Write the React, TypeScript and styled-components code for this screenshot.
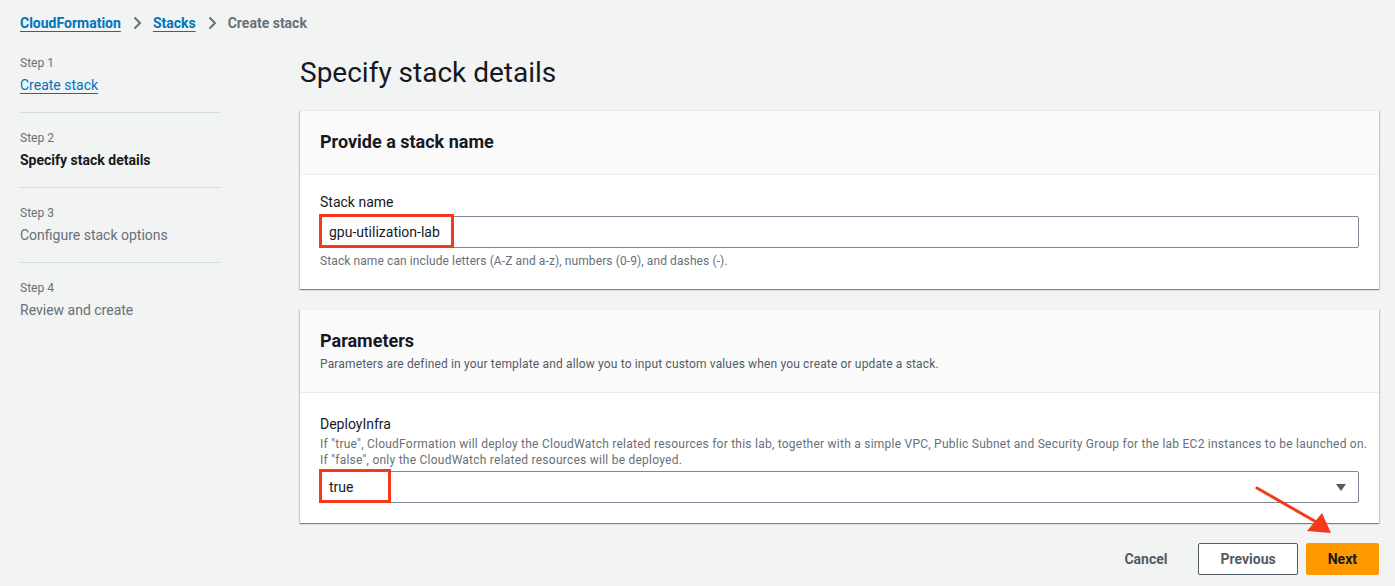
import React from "react";
import styled, { createGlobalStyle } from "styled-components";

const GlobalStyle = createGlobalStyle`
  html, body { margin: 0; padding: 0; background: #f2f3f3; }
  body { font-family: Roboto, "Noto Sans", Arial, sans-serif; color: #16191f; }
  * { box-sizing: border-box; }
`;

const Page = styled.div`
  position: relative;
  padding: 12px 16px 0 20px;
`;

const Breadcrumbs = styled.nav`
  display: flex;
  align-items: center;
  gap: 11px;
  font-size: 14px;
  line-height: 22px;
  font-weight: 700;
`;

const Crumb = styled.a<{ $current?: boolean }>`
  color: ${(p) => (p.$current ? "#687078" : "#0073bb")};
  text-decoration: ${(p) => (p.$current ? "none" : "underline")};
  text-underline-offset: 3px;
`;

const Chevron = () => (
  <svg width="10" height="14" viewBox="0 0 10 14">
    <path d="M2.5 1.5 L8 7 L2.5 12.5" fill="none" stroke="#687078" strokeWidth="2" />
  </svg>
);

const Layout = styled.div`
  display: grid;
  grid-template-columns: 200px minmax(0, 1fr);
  column-gap: 80px;
  margin-top: 21px;
`;

const StepList = styled.ol`
  list-style: none;
  margin: 0;
  padding: 0;
`;

const StepItem = styled.li`
  padding: 17px 0 16px;
  border-bottom: 1px solid #d5dbdb;
  &:first-child { padding-top: 0; }
  &:last-child { border-bottom: none; }
`;

const StepNum = styled.div`
  font-size: 12px;
  line-height: 16px;
  color: #687078;
  margin-bottom: 3px;
`;

const StepLabel = styled.div<{ $state: "link" | "active" | "idle" }>`
  font-size: 14px;
  line-height: 22px;
  color: ${(p) => (p.$state === "link" ? "#0073bb" : p.$state === "active" ? "#16191f" : "#687078")};
  font-weight: ${(p) => (p.$state === "active" ? 700 : 400)};
  text-decoration: ${(p) => (p.$state === "link" ? "underline" : "none")};
  text-underline-offset: 3px;
`;

const Main = styled.main`
  display: flex;
  flex-direction: column;
  min-width: 0;
`;

const Title = styled.h1`
  margin: 0 0 19px;
  font-size: 28px;
  line-height: 36px;
  font-weight: 400;
  color: #16191f;
`;

const Card = styled.section`
  background: #fff;
  border-top: 1px solid #eaeded;
  box-shadow: 0 1px 1px 0 rgba(0, 28, 36, 0.3), 1px 1px 1px 0 rgba(0, 28, 36, 0.15),
    -1px 1px 1px 0 rgba(0, 28, 36, 0.15);
  & + & { margin-top: 20px; }
`;

const CardHeader = styled.header`
  background: #fafafa;
  border-bottom: 1px solid #eaeded;
  padding: 19px 20px 20px;
`;

const CardTitle = styled.h2`
  margin: 0;
  font-size: 18px;
  line-height: 24px;
  font-weight: 700;
`;

const CardDesc = styled.p`
  margin: 3px 0 0;
  font-size: 12px;
  line-height: 16px;
  letter-spacing: 0.15px;
  color: #545b64;
`;

const CardBody = styled.div<{ $top: number }>`
  padding: ${(p) => p.$top}px 20px 20px;
`;

const FieldLabel = styled.label`
  display: block;
  font-size: 14px;
  line-height: 22px;
  color: #16191f;
`;

const FieldDesc = styled.div`
  margin-top: 1px;
  font-size: 12px;
  line-height: 16px;
  letter-spacing: 0.24px;
  white-space: nowrap;
  color: #687078;
`;

const Control = styled.div`
  position: relative;
  margin-top: 3px;
`;

const TextBox = styled.div`
  height: 32px;
  border: 1px solid #7d8998;
  border-radius: 2px;
  padding: 0 8px;
  display: flex;
  align-items: center;
  font-size: 14px;
  color: #16191f;
  background: #fff;
`;

const SelectBox = styled(TextBox)`
  justify-content: space-between;
  padding-right: 12px;
`;

const Hint = styled.div`
  margin-top: 5px;
  font-size: 12px;
  line-height: 16px;
  letter-spacing: 0.1px;
  color: #687078;
`;

const Highlight = styled.span<{ $w: number }>`
  position: absolute;
  left: -1px;
  top: -2px;
  width: ${(p) => p.$w}px;
  height: 34px;
  border: 3px solid #f43a1c;
  pointer-events: none;
`;

const Footer = styled.div`
  display: flex;
  justify-content: flex-end;
  align-items: center;
  gap: 8px;
  margin-top: 20px;
`;

const Button = styled.button<{ $variant: "link" | "normal" | "primary" }>`
  height: 32px;
  padding: 0 21px;
  font-family: inherit;
  font-size: 14px;
  font-weight: 700;
  border-radius: 2px;
  cursor: pointer;
  border: 1px solid
    ${(p) => (p.$variant === "normal" ? "#545b64" : p.$variant === "primary" ? "#ff9900" : "transparent")};
  background: ${(p) => (p.$variant === "primary" ? "#ff9900" : p.$variant === "normal" ? "#fff" : "transparent")};
  color: ${(p) => (p.$variant === "primary" ? "#16191f" : "#545b64")};
  margin-right: ${(p) => (p.$variant === "link" ? "1px" : "0")};
`;

const ArrowOverlay = styled.svg`
  position: absolute;
  left: 1250px;
  top: 480px;
  pointer-events: none;
`;

export default function App() {
  return (
    <>
      <GlobalStyle />
      <Page>
        <Breadcrumbs>
          <Crumb href="#">CloudFormation</Crumb>
          <Chevron />
          <Crumb href="#">Stacks</Crumb>
          <Chevron />
          <Crumb $current>Create stack</Crumb>
        </Breadcrumbs>
        <Layout>
          <StepList>
            <StepItem>
              <StepNum>Step 1</StepNum>
              <StepLabel $state="link">Create stack</StepLabel>
            </StepItem>
            <StepItem>
              <StepNum>Step 2</StepNum>
              <StepLabel $state="active">Specify stack details</StepLabel>
            </StepItem>
            <StepItem>
              <StepNum>Step 3</StepNum>
              <StepLabel $state="idle">Configure stack options</StepLabel>
            </StepItem>
            <StepItem>
              <StepNum>Step 4</StepNum>
              <StepLabel $state="idle">Review and create</StepLabel>
            </StepItem>
          </StepList>
          <Main>
            <Title>Specify stack details</Title>
            <Card>
              <CardHeader>
                <CardTitle>Provide a stack name</CardTitle>
              </CardHeader>
              <CardBody $top={16}>
                <FieldLabel>Stack name</FieldLabel>
                <Control>
                  <TextBox>gpu-utilization-lab</TextBox>
                  <Highlight $w={135} />
                </Control>
                <Hint>Stack name can include letters (A-Z and a-z), numbers (0-9), and dashes (-).</Hint>
              </CardBody>
            </Card>
            <Card>
              <CardHeader>
                <CardTitle>Parameters</CardTitle>
                <CardDesc>
                  Parameters are defined in your template and allow you to input custom values when you create or
                  update a stack.
                </CardDesc>
              </CardHeader>
              <CardBody $top={20}>
                <FieldLabel>DeployInfra</FieldLabel>
                <FieldDesc>
                  If "true", CloudFormation will deploy the CloudWatch related resources for this lab, together with a
                  simple VPC, Public Subnet and Security Group for the lab EC2 instances to be launched on.
                  <br />
                  If "false", only the CloudWatch related resources will be deployed.
                </FieldDesc>
                <Control>
                  <SelectBox>
                    <span>true</span>
                    <svg width="10" height="7" viewBox="0 0 10 7">
                      <path d="M0 0 H10 L5 7 Z" fill="#545b64" />
                    </svg>
                  </SelectBox>
                  <Highlight $w={72} />
                </Control>
              </CardBody>
            </Card>
            <Footer>
              <Button $variant="link">Cancel</Button>
              <Button $variant="normal">Previous</Button>
              <Button $variant="primary">Next</Button>
            </Footer>
          </Main>
        </Layout>
        <ArrowOverlay width="90" height="60" viewBox="1250 480 90 60">
          <line x1="1257" y1="488" x2="1318" y2="523" stroke="#f43a1c" strokeWidth="3" strokeLinecap="round" />
          <path d="M1331 533 L1307 531 L1322 513 Z" fill="#f43a1c" />
        </ArrowOverlay>
      </Page>
    </>
  );
}
